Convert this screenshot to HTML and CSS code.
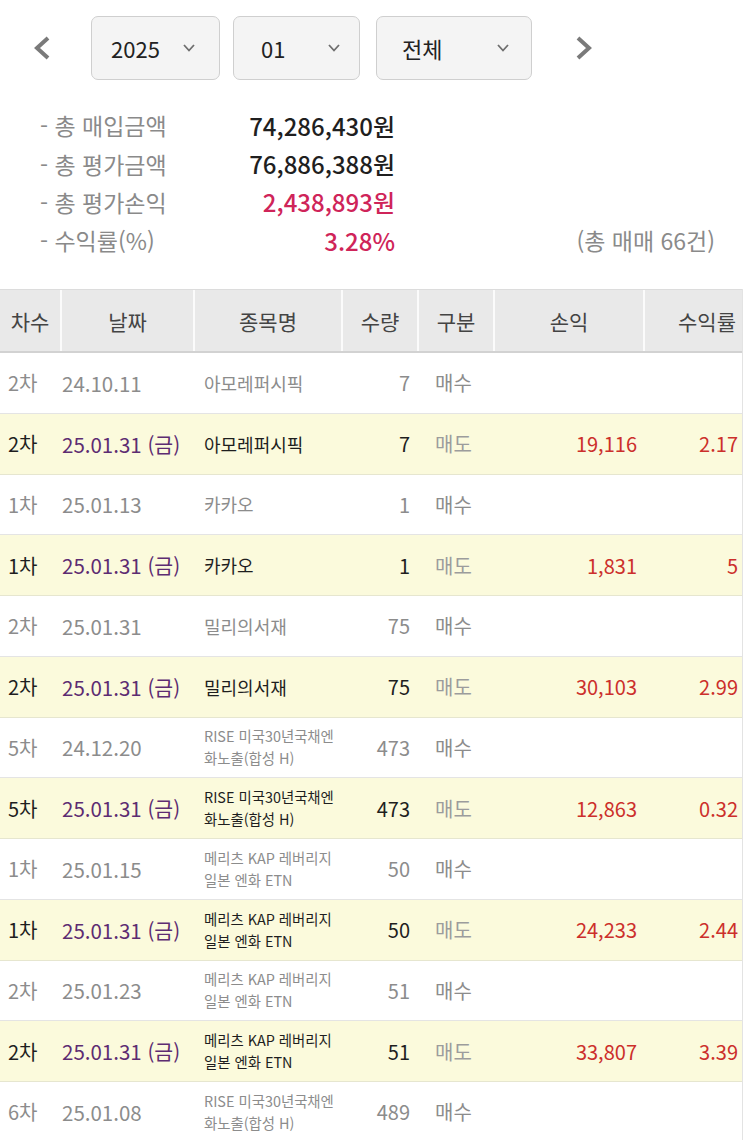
FILE: index.html
```html
<!DOCTYPE html>
<html lang="ko">
<head>
<meta charset="utf-8">
<title>매매 내역</title>
<link rel="stylesheet" href="styles.css">
</head>
<body>
<div class="page">
  <div class="filter">
    <span class="nav-arrow"><svg width="20" height="26" viewBox="0 0 20 26"><path d="M16 3 L5 13 L16 23" fill="none" stroke="#7a7a7a" stroke-width="4"/></svg></span>
    <div class="select s-year"><span>2025</span><svg class="chev" width="12" height="8" viewBox="0 0 12 8"><path d="M1 1 L6 6.5 L11 1" fill="none" stroke="#6e6e6e" stroke-width="1.8"/></svg></div>
    <div class="select s-month"><span>01</span><svg class="chev" width="12" height="8" viewBox="0 0 12 8"><path d="M1 1 L6 6.5 L11 1" fill="none" stroke="#6e6e6e" stroke-width="1.8"/></svg></div>
    <div class="select s-all"><span>전체</span><svg class="chev" width="12" height="8" viewBox="0 0 12 8"><path d="M1 1 L6 6.5 L11 1" fill="none" stroke="#6e6e6e" stroke-width="1.8"/></svg></div>
    <span class="nav-arrow right"><svg width="20" height="26" viewBox="0 0 20 26"><path d="M4 3 L15 13 L4 23" fill="none" stroke="#7a7a7a" stroke-width="4"/></svg></span>
  </div>

  <div class="summary">
    <div class="label">- 총 매입금액</div><div class="value">74,286,430원</div><div class="note"></div>
    <div class="label">- 총 평가금액</div><div class="value">76,886,388원</div><div class="note"></div>
    <div class="label">- 총 평가손익</div><div class="value red">2,438,893원</div><div class="note"></div>
    <div class="label">- 수익률(%)</div><div class="value red">3.28%</div><div class="note">(총 매매 66건)</div>
  </div>

  <div class="table">
    <div class="thead">
      <div>차수</div><div>날짜</div><div>종목명</div><div>수량</div><div>구분</div><div>손익</div><div class="last">수익률</div>
    </div>

    <div class="row buy"><div class="c-no">2차</div><div class="c-date">24.10.11</div><div class="c-name">아모레퍼시픽</div><div class="c-qty">7</div><div class="c-type">매수</div><div class="c-pl"></div><div class="c-rate"></div></div>
    <div class="row sell"><div class="c-no">2차</div><div class="c-date">25.01.31 (금)</div><div class="c-name">아모레퍼시픽</div><div class="c-qty">7</div><div class="c-type">매도</div><div class="c-pl">19,116</div><div class="c-rate">2.17</div></div>

    <div class="row buy"><div class="c-no">1차</div><div class="c-date">25.01.13</div><div class="c-name">카카오</div><div class="c-qty">1</div><div class="c-type">매수</div><div class="c-pl"></div><div class="c-rate"></div></div>
    <div class="row sell"><div class="c-no">1차</div><div class="c-date">25.01.31 (금)</div><div class="c-name">카카오</div><div class="c-qty">1</div><div class="c-type">매도</div><div class="c-pl">1,831</div><div class="c-rate">5</div></div>

    <div class="row buy"><div class="c-no">2차</div><div class="c-date">25.01.31</div><div class="c-name">밀리의서재</div><div class="c-qty">75</div><div class="c-type">매수</div><div class="c-pl"></div><div class="c-rate"></div></div>
    <div class="row sell"><div class="c-no">2차</div><div class="c-date">25.01.31 (금)</div><div class="c-name">밀리의서재</div><div class="c-qty">75</div><div class="c-type">매도</div><div class="c-pl">30,103</div><div class="c-rate">2.99</div></div>

    <div class="row buy"><div class="c-no">5차</div><div class="c-date">24.12.20</div><div class="c-name small">RISE 미국30년국채엔<br>화노출(합성 H)</div><div class="c-qty">473</div><div class="c-type">매수</div><div class="c-pl"></div><div class="c-rate"></div></div>
    <div class="row sell"><div class="c-no">5차</div><div class="c-date">25.01.31 (금)</div><div class="c-name small">RISE 미국30년국채엔<br>화노출(합성 H)</div><div class="c-qty">473</div><div class="c-type">매도</div><div class="c-pl">12,863</div><div class="c-rate">0.32</div></div>

    <div class="row buy"><div class="c-no">1차</div><div class="c-date">25.01.15</div><div class="c-name small">메리츠 KAP 레버리지<br>일본 엔화 ETN</div><div class="c-qty">50</div><div class="c-type">매수</div><div class="c-pl"></div><div class="c-rate"></div></div>
    <div class="row sell"><div class="c-no">1차</div><div class="c-date">25.01.31 (금)</div><div class="c-name small">메리츠 KAP 레버리지<br>일본 엔화 ETN</div><div class="c-qty">50</div><div class="c-type">매도</div><div class="c-pl">24,233</div><div class="c-rate">2.44</div></div>

    <div class="row buy"><div class="c-no">2차</div><div class="c-date">25.01.23</div><div class="c-name small">메리츠 KAP 레버리지<br>일본 엔화 ETN</div><div class="c-qty">51</div><div class="c-type">매수</div><div class="c-pl"></div><div class="c-rate"></div></div>
    <div class="row sell"><div class="c-no">2차</div><div class="c-date">25.01.31 (금)</div><div class="c-name small">메리츠 KAP 레버리지<br>일본 엔화 ETN</div><div class="c-qty">51</div><div class="c-type">매도</div><div class="c-pl">33,807</div><div class="c-rate">3.39</div></div>

    <div class="row buy"><div class="c-no">6차</div><div class="c-date">25.01.08</div><div class="c-name small">RISE 미국30년국채엔<br>화노출(합성 H)</div><div class="c-qty">489</div><div class="c-type">매수</div><div class="c-pl"></div><div class="c-rate"></div></div>
  </div>
</div>
</body>
</html>
```

FILE: styles.css
```css
* { box-sizing: border-box; }
html, body { margin: 0; padding: 0; background: #fff; }
body {
  font-family: "Noto Sans CJK KR", "Noto Sans", sans-serif;
  color: #222;
  overflow: hidden;
}
.page { width: 743px; }

/* filter bar */
.filter {
  display: flex;
  align-items: center;
  height: 97px;
  padding: 16px 0 17px 32px;
}
.nav-arrow { display: flex; width: 20px; height: 26px; }
.nav-arrow.right { margin-left: 42px; }
.select {
  display: flex;
  align-items: center;
  justify-content: space-between;
  height: 64px;
  border: 1px solid #cfcfcf;
  border-radius: 7px;
  background: #f4f4f4;
  font-size: 22px;
  color: #222;
}
.s-year { width: 129px; margin-left: 39px; padding: 0 24px 0 19px; }
.s-month { width: 127px; margin-left: 13px; padding: 0 19px 0 27px; }
.s-all { width: 156px; margin-left: 16px; padding: 0 22px 0 25px; }
.chev { display: block; }

/* summary */
.summary {
  display: grid;
  grid-template-columns: 170px 185px 320px;
  grid-auto-rows: 38.4px;
  align-items: center;
  padding: 9px 0 0 40px;
  height: 192px;
}
.summary .label { font-size: 23px; color: #8a8a8a; }
.summary .value { font-size: 24px; font-weight: 500; text-align: right; color: #1f1f1f; }
.summary .value.red { color: #cf2459; }
.summary .note { font-size: 23px; color: #8a8a8a; text-align: right; }

/* table */
.table { border-right: 1px solid #e3e3e3; width: 743px; }
.thead, .row {
  display: grid;
  grid-template-columns: 60px 133px 148px 76px 76px 150px 100px;
}
.thead {
  height: 64px;
  border-top: 1px solid #dcdcdc;
  border-bottom: 2px solid #d2d2d2;
  background: #e9e9e9;
  font-size: 21px;
  color: #444;
}
.thead > div {
  display: flex;
  align-items: center;
  justify-content: center;
  border-left: 2px solid #fbfbfb;
}
.thead > div:first-child { border-left: 0; }
.thead > .last { justify-content: flex-end; padding-right: 7px; }

.row {
  height: 60.75px;
  border-bottom: 1px solid #e4e4e4;
  font-size: 20px;
  align-items: center;
}
.row > div { white-space: nowrap; }
.row.buy { background: #fff; color: #8c8c8c; }
.row.sell { background: #fbfadc; color: #1e1e1e; border-bottom-color: #e6e6cf; }

.c-no { padding-left: 8px; }
.c-date { padding-left: 2px; font-size: 20.5px; }
.row.sell .c-date { color: #5d2c72; }
.c-name { padding-left: 11px; font-size: 18px; }
.c-name.small { font-size: 14.4px; line-height: 22px; }
.c-qty { text-align: right; padding-right: 7px; }
.c-type { padding-left: 18px; }
.row.sell .c-type { color: #9c9c9c; }
.c-pl { text-align: right; padding-right: 6px; color: #cc2f2b; }
.c-rate { text-align: right; padding-right: 5px; color: #cc2f2b; }
```
